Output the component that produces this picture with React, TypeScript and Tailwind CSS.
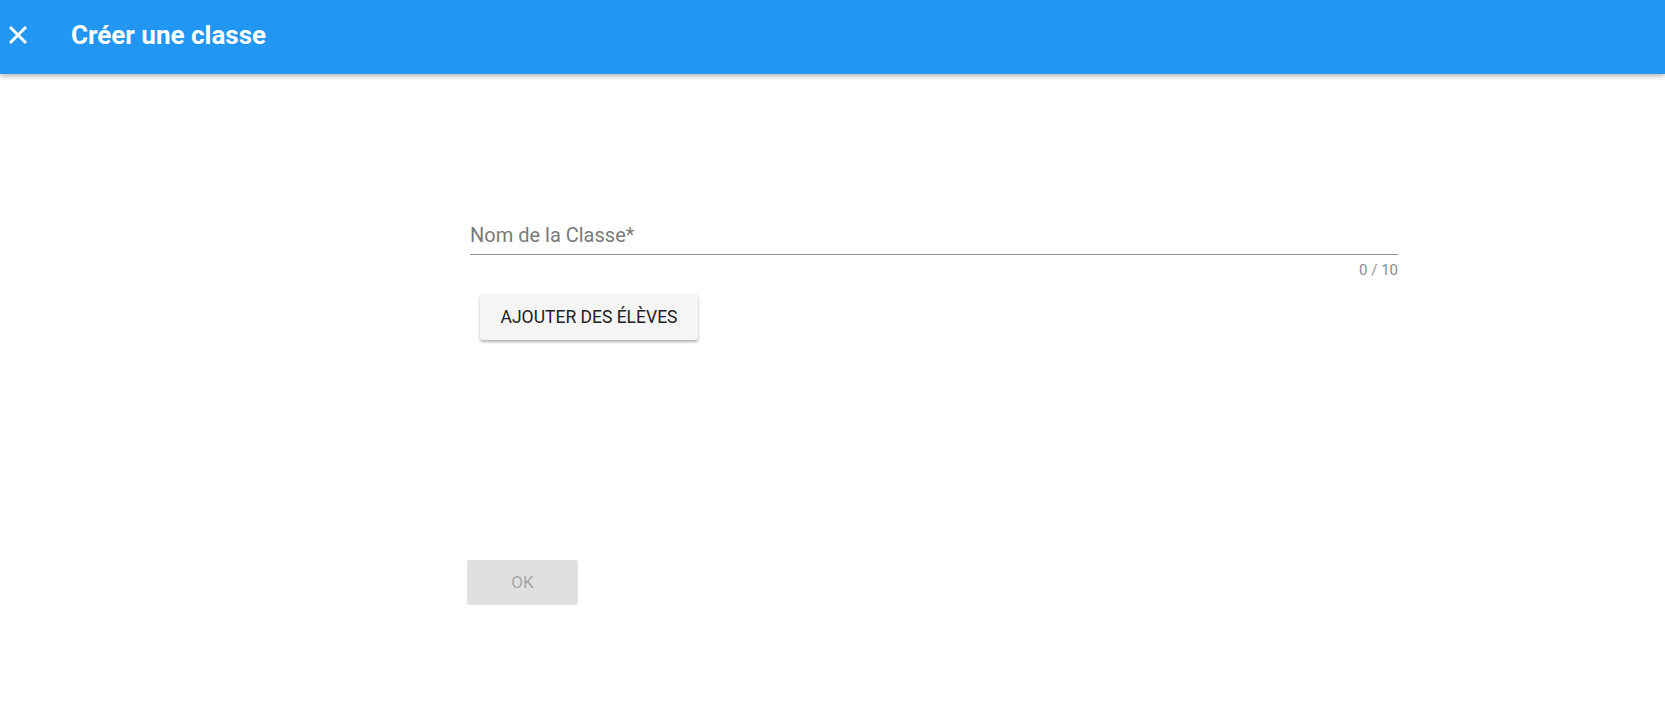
import React from "react";

const App: React.FC = () => {
  return (
    <div
      className="min-h-screen w-full bg-white"
      style={{ fontFamily: "Roboto, 'Liberation Sans', sans-serif" }}
    >
      {/* Top bar */}
      <header className="flex h-[74px] items-start bg-[#2196f3] pt-[20px] shadow-[0_2px_5px_rgba(0,0,0,0.3)]">
        <button className="ml-[3px] flex h-[30px] w-[30px] items-center justify-center text-white">
          <svg width="30" height="30" viewBox="0 0 24 24" fill="currentColor" stroke="currentColor" strokeWidth="0.4">
            <path d="M19 6.41 17.59 5 12 10.59 6.41 5 5 6.41 10.59 12 5 17.59 6.41 19 12 13.41 17.59 19 19 17.59 13.41 12z" />
          </svg>
        </button>
        <h1 className="ml-[38px] text-[26px] font-bold leading-[30px] text-white">
          Créer une classe
        </h1>
      </header>

      {/* Form */}
      <div className="ml-[470px] w-[928px] pt-[147px]">
        <div className="border-b border-[#949494] pb-[5px]">
          <div className="text-[20px] leading-[28px] text-[#7a7a7a]">
            Nom de la Classe*
          </div>
        </div>
        <div className="mt-[6px] text-right text-[15px] leading-[18px] text-[#8c8c8c]">
          0 / 10
        </div>

        <button className="ml-[10px] mt-[15px] h-[46px] w-[218px] rounded-[3px] bg-[#f5f5f5] text-[17.5px] font-normal text-[#212121] shadow-[0_2px_3px_rgba(0,0,0,0.3)]">
          AJOUTER DES ÉLÈVES
        </button>

        <div className="mt-[220px]">
          <button
            disabled
            className="-ml-[3px] h-[45px] w-[111px] rounded-[3px] bg-[#e0e0e0] text-[17px] font-normal text-[#a6a6a6]"
          >
            OK
          </button>
        </div>
      </div>
    </div>
  );
};

export default App;
